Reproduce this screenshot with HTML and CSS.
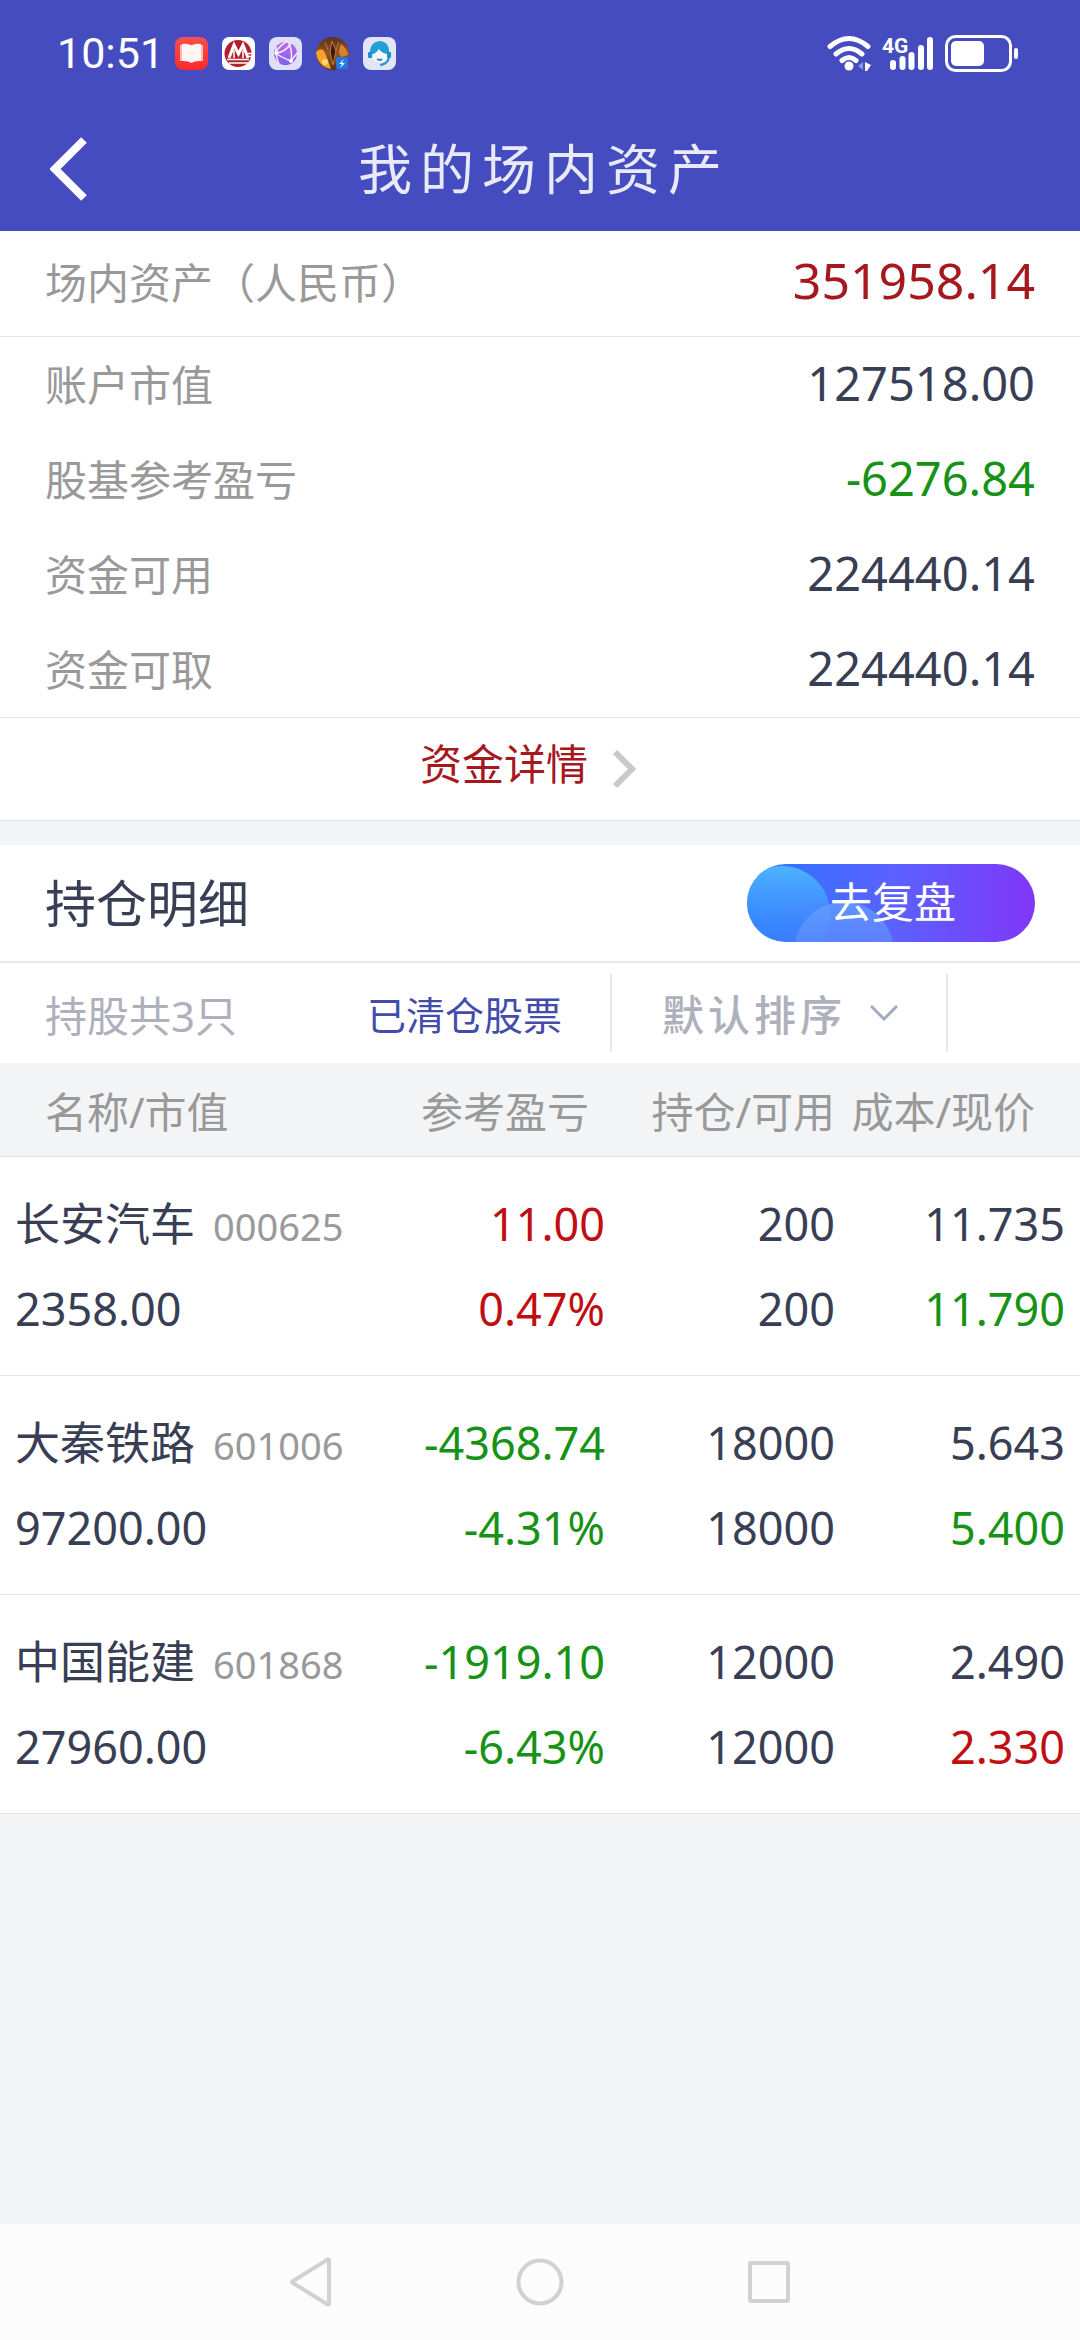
FILE: index.html
```html
<!DOCTYPE html>
<html lang="zh-CN">
<head>
<meta charset="utf-8">
<meta name="viewport" content="width=device-width, initial-scale=1">
<title>我的场内资产</title>
<link rel="stylesheet" href="styles.css">
</head>
<body>
<header class="top">
  <div class="status">
    <span class="time">10:51</span>
    <div class="apps">
      <svg class="app" viewBox="0 0 33 33" aria-hidden="true">
        <defs><linearGradient id="red" x1="0" y1="0" x2="0" y2="1"><stop offset="0" stop-color="#f8504c"/><stop offset="1" stop-color="#fb2a2c"/></linearGradient></defs>
        <rect width="33" height="33" rx="8" fill="url(#red)"/>
        <path d="M5 8h23v16H5z" fill="#ffb9b5"/>
        <path d="M7 7q6-1 9.500 1.500Q20 6 26 7v17q-6-.5-9.500 2Q13 23.500 7 24z" fill="#fff6f4"/>
      </svg>
      <svg class="app" viewBox="0 0 33 33" aria-hidden="true">
        <rect width="33" height="33" rx="7" fill="#fff"/>
        <circle cx="16" cy="16.500" r="13.500" fill="#b3202c"/>
        <path d="M7 21L12 8l4.500 9L21 8l5 13" fill="none" stroke="#fff" stroke-width="3"/>
        <path d="M12 13v8M21 13v8" stroke="#fff" stroke-width="1.500"/>
        <path d="M5 22.500h22M24 16.500h9M26 19.500h7M7 26h19" stroke="#fff" stroke-width="1.500"/>
      </svg>
      <svg class="app" viewBox="0 0 33 33" aria-hidden="true">
        <defs><linearGradient id="globe" x1="0" y1="0" x2="0" y2="1"><stop offset="0" stop-color="#c468e8"/><stop offset="1" stop-color="#8060ee"/></linearGradient></defs>
        <rect width="33" height="33" rx="8" fill="#dfe0f6"/>
        <circle cx="16.500" cy="16.500" r="11.500" fill="url(#globe)"/>
        <path d="M19 4q-7 3-13 12 6 4 16 8 2-10-3-20M7 10q-1 8 3 17M22 24l7-9M6 16q10 0 16-10" fill="none" stroke="#eef" stroke-width="1.500"/>
        <circle cx="7.500" cy="16" r="2" fill="#fff"/><circle cx="22" cy="24" r="2" fill="#fff"/>
      </svg>
      <svg class="app" viewBox="0 0 33 33" aria-hidden="true">
        <defs><linearGradient id="cat" x1="0" y1="0" x2="0" y2="1"><stop offset="0" stop-color="#593020"/><stop offset=".5" stop-color="#94551f"/><stop offset="1" stop-color="#563016"/></linearGradient></defs>
        <circle cx="16.500" cy="16.500" r="16.500" fill="url(#cat)"/>
        <path d="M0 15q6-6 9 1l4 10 2 6Q2 30 0 15z" fill="#f5a02f"/>
        <path d="M25 7q6 4 7 11l-7 2q-4-6 0-13z" fill="#d9822d"/>
        <path d="M16 4l-2 11 3 13 3-14zM9 5l3 8M23 5l-3 8" fill="#3c1c12" stroke="#c27a3c"/>
        <circle cx="9" cy="25" r="3" fill="#ffd66e"/>
        <rect x="20" y="20" width="12" height="12" rx="2" fill="#2577e8"/>
        <path d="M28 22l-5 5h3l-2 4 5-5h-3z" fill="#fff"/>
      </svg>
      <svg class="app" viewBox="0 0 33 33" aria-hidden="true">
        <rect width="33" height="33" rx="8" fill="#e2e5f5"/>
        <path d="M9 17q3-1 6-5 3 4 10 4-1 10-8 10-7-1-8-9z" fill="#f8f8ff"/>
        <path d="M7 18Q6 5 17 4q10 1 9 13-7 0-10-5-3 5-9 6z" fill="#239fd8"/>
        <rect x="5" y="15" width="4" height="6" rx="1" fill="#1b8fcb"/><rect x="24" y="15" width="4" height="6" rx="1" fill="#1b8fcb"/>
        <path d="M26 20q-1 7-9 8M14 22q3 2 5 0" fill="none" stroke="#2b8fce" stroke-width="2"/>
      </svg>
    </div>
    <svg class="signals" viewBox="0 0 192 38" role="img" aria-label="信号与电量">
      <g fill="none" stroke="#fff" stroke-width="5" stroke-linecap="round">
        <path d="M3 11.500q19-16 38 0M9 19q13-11 26 0M15 25.500q7-6 14 0"/>
      </g>
      <circle cx="22" cy="31" r="4.500" fill="#fff"/>
      <path d="M36 27v8l-5-4z" fill="#8f95e6"/><path d="M38 27l6 3-4 6h-2z" fill="#fff"/>
      <text class="net" x="55" y="18">4G</text>
      <path d="M66 28v4M75.500 24v8M84.500 20v12M94 13v19M103 5v27" stroke="#fff" stroke-width="6" stroke-linecap="round"/>
      <rect x="119.500" y="1.500" width="64" height="34" rx="9" fill="none" stroke="#fff" stroke-width="3"/>
      <rect x="124" y="6" width="33" height="25" rx="5" fill="#fff"/>
      <path d="M189 15v7" stroke="#fff" stroke-width="4" stroke-linecap="round"/>
    </svg>
  </div>
  <div class="titlebar">
    <button class="back" type="button" aria-label="返回"><svg width="38" height="64" viewBox="0 0 38 64"><path d="M34 3L5 32l29 29" fill="none" stroke="#fff" stroke-width="8"/></svg></button>
    <h1 class="title">我的场内资产</h1>
  </div>
</header>

<main class="main">
  <section class="assets">
    <dl class="line line-total"><dt>场内资产（人民币）</dt><dd>351958.14</dd></dl>
    <dl class="line"><dt>账户市值</dt><dd>127518.00</dd></dl>
    <dl class="line"><dt>股基参考盈亏</dt><dd class="down">-6276.84</dd></dl>
    <dl class="line"><dt>资金可用</dt><dd>224440.14</dd></dl>
    <dl class="line"><dt>资金可取</dt><dd>224440.14</dd></dl>
    <a class="detail" href="#detail"><span class="detail-text">资金详情</span><svg width="48" height="40" viewBox="0 0 48 40" aria-hidden="true"><path d="M3 3l17 17L3 37" fill="none" stroke="#c8c8cd" stroke-width="6"/></svg></a>
  </section>

  <section class="holdings">
    <div class="heading">
      <h2 class="heading-text">持仓明细</h2>
      <button class="review" type="button">
        <svg class="review-art" viewBox="0 0 288 78" aria-hidden="true">
          <defs>
            <linearGradient id="b1" x1="0" y1="0" x2="0" y2="1"><stop offset="0" stop-color="#4cb4ff"/><stop offset="1" stop-color="#3c8cff" stop-opacity=".1"/></linearGradient>
            <linearGradient id="b2" x1="0" y1="0" x2="0" y2="1"><stop offset="0" stop-color="#62a0ff" stop-opacity=".8"/><stop offset="1" stop-color="#6a80ff" stop-opacity=".2"/></linearGradient>
          </defs>
          <circle cx="35" cy="50" r="48" fill="url(#b1)"/>
          <circle cx="97" cy="88" r="50" fill="url(#b2)"/>
        </svg>
        <span class="review-text">去复盘</span>
      </button>
    </div>
    <div class="filters">
      <span class="count">持股共3只</span>
      <a class="closed" href="#closed">已清仓股票</a>
      <div class="sort">
        <select class="sort-select" aria-label="排序方式"><option>默认排序</option></select>
        <svg class="sort-arrow" width="28" height="16" viewBox="0 0 28 16" aria-hidden="true"><path d="M1 1l13 13L27 1" fill="none" stroke="#a3abbd" stroke-width="3"/></svg>
      </div>
    </div>
    <table class="table">
      <colgroup><col><col class="c-profit"><col class="c-amount"><col class="c-price"></colgroup>
      <thead>
        <tr><th scope="col">名称/市值</th><th scope="col">参考盈亏</th><th scope="col">持仓/可用</th><th scope="col">成本/现价</th></tr>
      </thead>
      <tbody>
        <tr>
          <th scope="row"><span class="v">长安汽车<small class="code">000625</small></span><span class="v">2358.00</span></th>
          <td><span class="v up">11.00</span><span class="v up">0.47%</span></td>
          <td><span class="v">200</span><span class="v">200</span></td>
          <td><span class="v">11.735</span><span class="v down">11.790</span></td>
        </tr>
        <tr>
          <th scope="row"><span class="v">大秦铁路<small class="code">601006</small></span><span class="v">97200.00</span></th>
          <td><span class="v down">-4368.74</span><span class="v down">-4.31%</span></td>
          <td><span class="v">18000</span><span class="v">18000</span></td>
          <td><span class="v">5.643</span><span class="v down">5.400</span></td>
        </tr>
        <tr>
          <th scope="row"><span class="v">中国能建<small class="code">601868</small></span><span class="v">27960.00</span></th>
          <td><span class="v down">-1919.10</span><span class="v down">-6.43%</span></td>
          <td><span class="v">12000</span><span class="v">12000</span></td>
          <td><span class="v">2.490</span><span class="v up">2.330</span></td>
        </tr>
      </tbody>
    </table>
  </section>
</main>

<nav class="nav" aria-label="系统导航">
  <button class="key" type="button" aria-label="返回"><svg width="48" height="52" viewBox="0 0 48 52"><path d="M42 4v44Q41 49 40 48L6 27q-2-1 0-2L40 4q1-1 2 0z"/></svg></button>
  <button class="key" type="button" aria-label="主页"><svg width="48" height="52" viewBox="0 0 48 52"><circle cx="24" cy="26" r="21.500"/></svg></button>
  <button class="key" type="button" aria-label="最近任务"><svg width="48" height="52" viewBox="0 0 48 52"><rect x="5" y="7" width="38" height="38" rx="1"/></svg></button>
</nav>
</body>
</html>
```
FILE: styles.css
```css
* { box-sizing: border-box; }

body {
  margin: 0;
  min-height: 100vh;
  display: flex;
  flex-direction: column;
  background: #f3f4f6;
  color: #383e54;
  font-family: "Noto Sans", "Noto Sans CJK SC", sans-serif;
  font-size: 42px;
}

h1, h2, dl, dd { margin: 0; font-weight: 400; }
button { border: 0; padding: 0; background: none; font: inherit; color: inherit; }
a { text-decoration: none; }
svg { display: block; flex: none; }

.up { color: #bf0f12; }
.down { color: #169216; }

/* Status bar and title */
.top { background: #444cbf; color: #fff; }
.status {
  display: flex;
  align-items: center;
  height: 107px;
  padding: 0 61px 0 57px;
}
.time { font: 400 43px/1 Roboto, sans-serif; width: 118px; }
.apps { display: flex; gap: 14px; margin-right: auto; }
.app { width: 33px; height: 33px; }
.signals { width: 192px; height: 38px; }
.net { font: 700 21px Roboto, sans-serif; fill: #fff; }

.titlebar {
  display: grid;
  grid-template-columns: 88px 1fr 88px;
  align-items: center;
  height: 124px;
}
.back { justify-self: end; }
.title {
  padding-left: 8px;
  text-align: center;
  font-size: 54px;
  line-height: 80px;
  letter-spacing: 8px;
  color: #e9eaf8;
}

.main { flex: 1; }

/* Asset summary */
.assets { background: #fff; border-bottom: 1px solid #e2e3e4; }
.line {
  display: flex;
  justify-content: space-between;
  align-items: baseline;
  height: 95px;
  padding: 0 45px;
  line-height: 92px;
}
.line dt { color: #999; }
.line dd { font-size: 47px; }
.line-total {
  height: 106px;
  line-height: 98px;
  border-bottom: 1px solid #e2e3e4;
}
.line-total dd { font-size: 50px; color: #a5181d; }
.detail {
  display: flex;
  justify-content: center;
  align-items: center;
  gap: 24px;
  height: 103px;
  border-top: 1px solid #e2e3e4;
  color: #a5181d;
}
.detail-text { padding-bottom: 16px; }

/* Holdings */
.holdings { margin-top: 24px; background: #fff; }
.heading {
  display: flex;
  justify-content: space-between;
  align-items: center;
  height: 118px;
  padding: 0 45px;
  border-bottom: 2px solid #e7ebeb;
}
.heading-text { font-size: 51px; line-height: 78px; }
.review {
  display: grid;
  width: 288px;
  height: 78px;
  border-radius: 39px;
  overflow: hidden;
  background: linear-gradient(90deg, #2a78ff, #5a62ff 50%, #8036f8);
  color: #fff;
}
.review-art, .review-text { grid-area: 1 / 1; }
.review-art { width: 288px; height: 78px; }
.review-text { padding-left: 4px; line-height: 76px; }

.filters {
  display: flex;
  align-items: center;
  height: 100px;
  padding: 0 132px 0 45px;
}
.count { color: #aeb0bb; }
.closed { margin: 0 48px 0 auto; font-size: 39px; color: #444cab; }
.sort {
  display: grid;
  align-items: center;
  width: 338px;
  height: 78px;
  border: solid #e5e8ee;
  border-width: 0 2px;
}
.sort-select {
  grid-area: 1 / 1;
  appearance: none;
  width: 100%;
  height: 78px;
  margin: 0;
  padding: 2px 0 0 50px;
  border: 0;
  background: none;
  font: 500 42px "Noto Sans", "Noto Sans CJK SC", sans-serif;
  letter-spacing: 4px;
  color: #aeb0bb;
}
.sort-arrow {
  grid-area: 1 / 1;
  justify-self: end;
  margin-right: 48px;
  pointer-events: none;
}

.table {
  width: 100%;
  table-layout: fixed;
  border-collapse: separate;
  border-spacing: 0;
}
.c-profit { width: 248px; }
.c-amount { width: 230px; }
.c-price { width: 245px; }
.table th, .table td {
  padding: 0;
  border-bottom: 1px solid #e2e3e4;
  font-weight: 400;
  text-align: right;
  white-space: nowrap;
}
.table thead th { height: 94px; background: #f3f4f6; color: #999; }
.table thead th:first-child { padding-left: 45px; text-align: left; }
.table thead th:nth-child(2) { padding-right: 16px; }
.table thead th:last-child { padding-right: 45px; }
.table tbody th, .table tbody td {
  padding: 24px 0;
  font-size: 45px;
  line-height: 85px;
}
.table tbody th { padding-left: 15px; text-align: left; }
.table tbody td:last-child { padding-right: 15px; }
.v { display: block; height: 85px; }
.code { margin-left: 18px; font-size: 38px; color: #999; }

/* System navigation */
.nav {
  display: flex;
  justify-content: center;
  align-items: center;
  gap: 181px;
  height: 116px;
  background: #fcfcfc;
}
.key svg { fill: none; stroke: #d1d1d1; stroke-width: 4; }
```
